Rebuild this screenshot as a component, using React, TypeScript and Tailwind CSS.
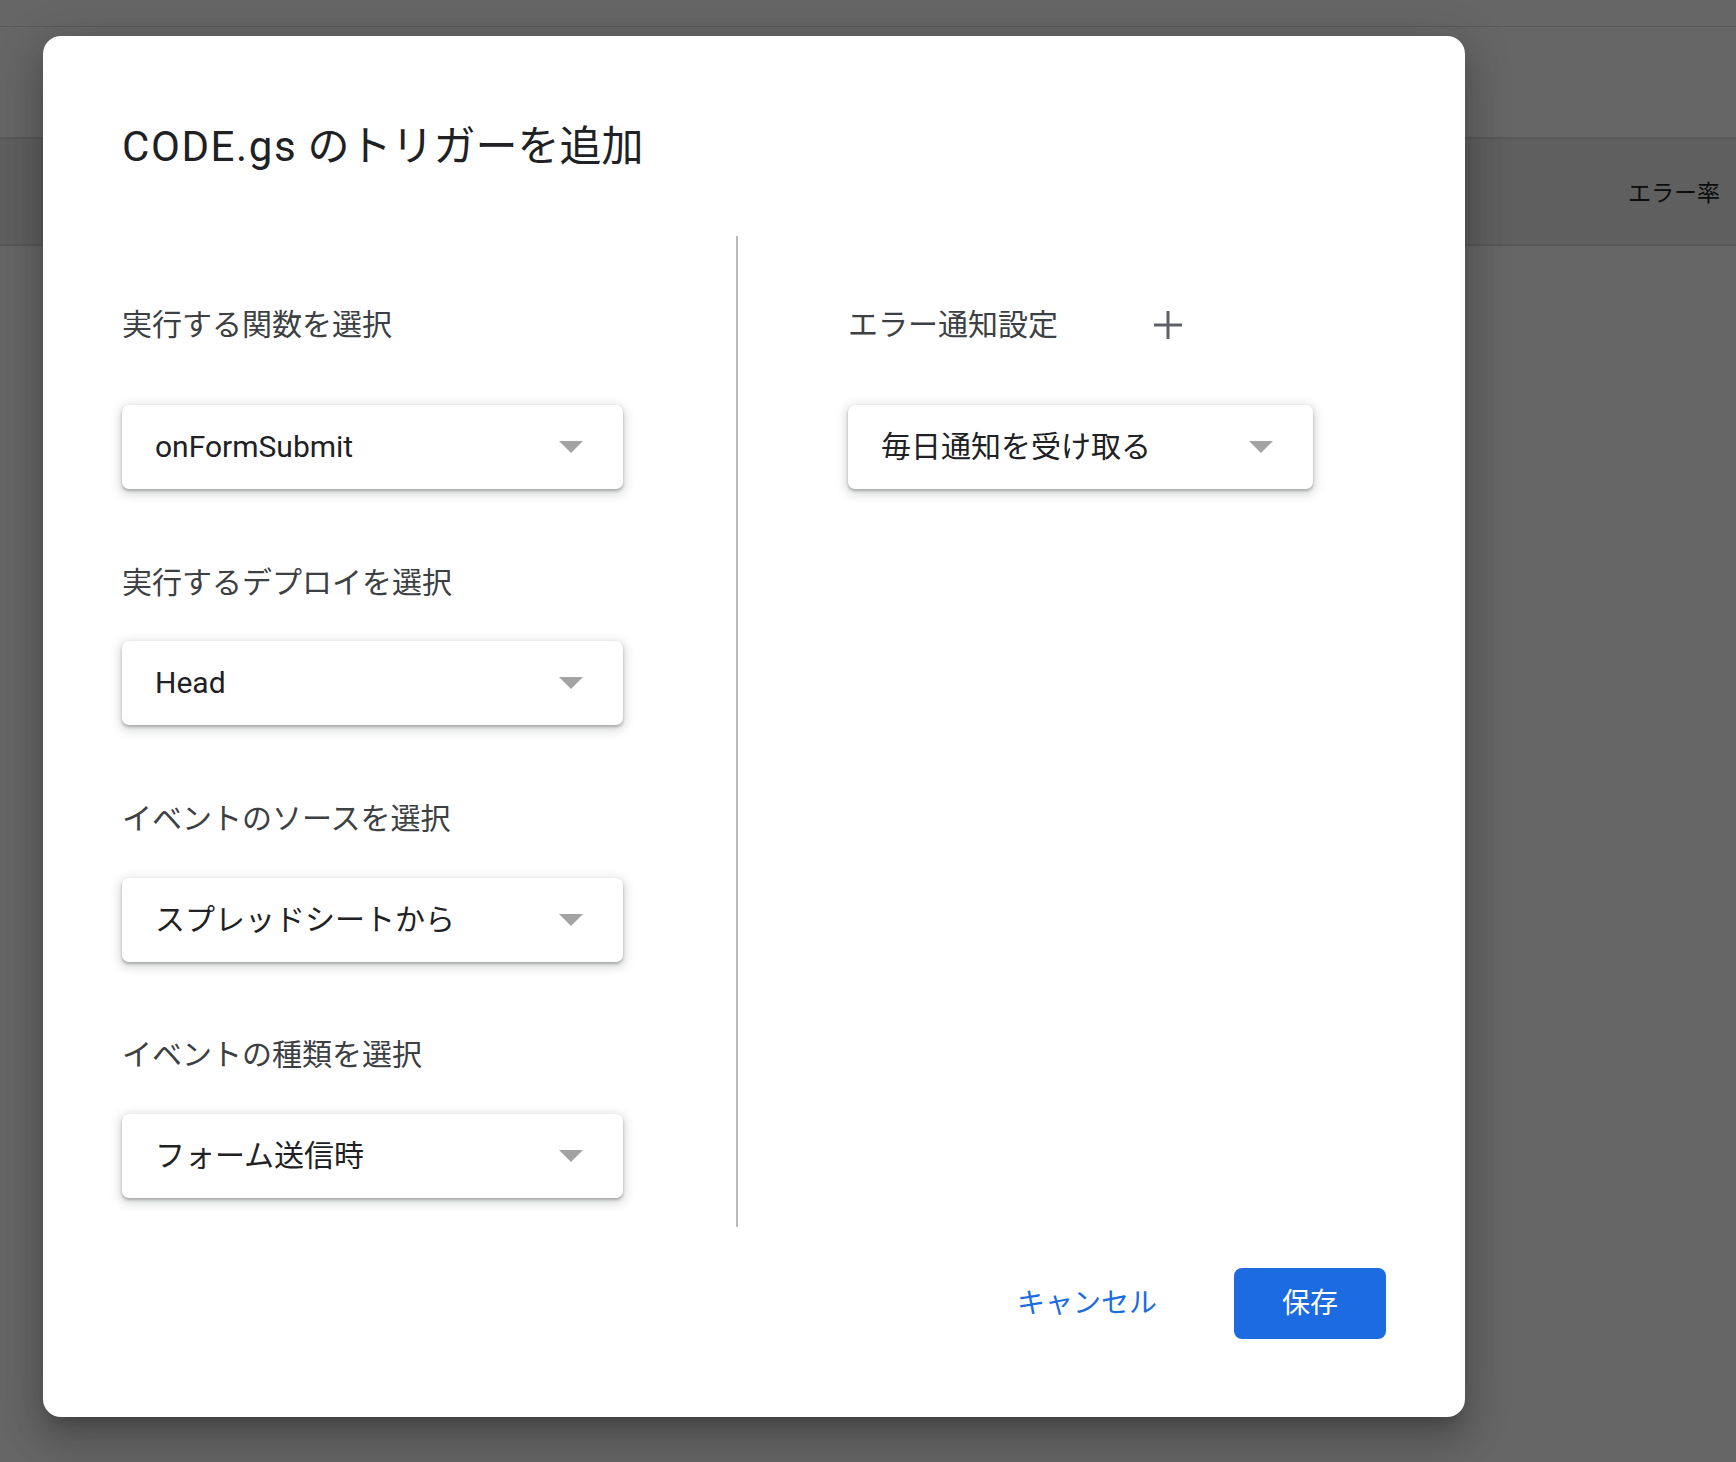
import React from "react";

const FONT = "font-['Roboto','Noto_Sans_CJK_JP',sans-serif]";

function Arrow() {
  return (
    <svg width="24" height="12" viewBox="0 0 24 12" className="shrink-0">
      <path d="M0 0 L24 0 L12 12 Z" fill="#a3a3a3" />
    </svg>
  );
}

function Select({ value, width }: { value: string; width: string }) {
  return (
    <div
      className={`${width} h-[84px] rounded-[7px] bg-white flex items-center justify-between pl-[33px] pr-[40px] shadow-[0_2px_3px_0_rgba(60,64,67,0.35),0_3px_10px_3px_rgba(60,64,67,0.18)]`}
    >
      <span className="text-[30px] text-[#202124] leading-none">{value}</span>
      <Arrow />
    </div>
  );
}

function Label({ children }: { children: React.ReactNode }) {
  return <div className="h-[40px] flex items-center text-[30px] text-[#3c4043] leading-none">{children}</div>;
}

export default function App() {
  return (
    <div className={`relative w-[1736px] h-[1462px] overflow-hidden bg-white ${FONT}`}>
      {/* underlying page */}
      <div className="flex flex-col">
        <div className="h-[27px] border-b border-[#dadce0]" />
        <div className="h-[112px] border-b-2 border-[#dadce0]" />
        <div className="h-[107px] bg-[#eeeeee] border-b-2 border-[#dadce0] flex items-center justify-end pr-[16px] pt-[6px]">
          <span className="text-[23px] text-[#202124]">エラー率</span>
        </div>
      </div>
      {/* overlay */}
      <div className="absolute inset-0 bg-black/60" />
      {/* dialog */}
      <div className="absolute left-[43px] top-[36px] w-[1422px] h-[1381px] bg-white rounded-[18px] shadow-[0_24px_38px_3px_rgba(0,0,0,0.14),0_9px_46px_8px_rgba(0,0,0,0.12),0_11px_15px_-7px_rgba(0,0,0,0.2)] flex flex-col px-[79px] pt-[87px] pb-[78px]">
        <h1 className="h-[48px] flex items-center text-[42px] leading-none text-[#202124] font-normal">
          <span className="tracking-[1.6px]">CODE.gs</span>
          <span>&nbsp;のトリガーを追加</span>
        </h1>
        <div className="mt-[65px] flex h-[991px]">
          <div className="w-[614px] pt-[69px] flex flex-col">
            <Label>実行する関数を選択</Label>
            <div className="mt-[60px]">
              <Select value="onFormSubmit" width="w-[501px]" />
            </div>
            <div className="mt-[74px]">
              <Label>実行するデプロイを選択</Label>
            </div>
            <div className="mt-[38px]">
              <Select value="Head" width="w-[501px]" />
            </div>
            <div className="mt-[74px]">
              <Label>イベントのソースを選択</Label>
            </div>
            <div className="mt-[39px]">
              <Select value="スプレッドシートから" width="w-[501px]" />
            </div>
            <div className="mt-[73px]">
              <Label>イベントの種類を選択</Label>
            </div>
            <div className="mt-[39px]">
              <Select value="フォーム送信時" width="w-[501px]" />
            </div>
          </div>
          <div className="w-[2px] bg-[#b8babd]" />
          <div className="pl-[110px] pt-[69px] flex flex-col">
            <div className="flex items-center">
              <Label>エラー通知設定</Label>
              <svg width="28" height="28" viewBox="0 0 28 28" className="ml-[96px]">
                <rect x="12.5" y="0" width="3" height="28" fill="#5f6368" />
                <rect x="0" y="12.5" width="28" height="3" fill="#5f6368" />
              </svg>
            </div>
            <div className="mt-[60px]">
              <Select value="毎日通知を受け取る" width="w-[465px]" />
            </div>
          </div>
        </div>
        <div className="mt-[41px] flex justify-end items-center">
          <button className="h-[71px] px-[16px] text-[28px] text-[#1a6ce0] bg-transparent">キャンセル</button>
          <button className="ml-[61px] w-[152px] h-[71px] rounded-[8px] bg-[#1d6be0] text-white text-[28px]">保存</button>
        </div>
      </div>
    </div>
  );
}
